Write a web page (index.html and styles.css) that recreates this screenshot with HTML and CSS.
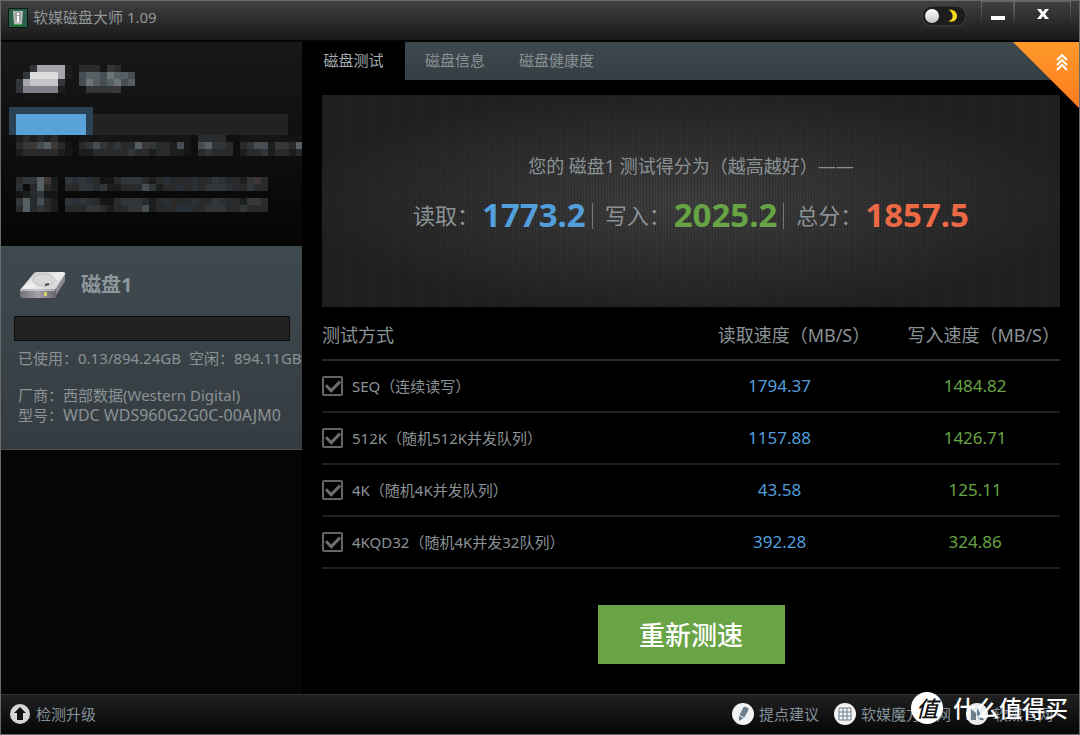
FILE: index.html
```html
<!DOCTYPE html>
<html lang="zh-CN">
<head>
<meta charset="utf-8">
<title>软媒磁盘大师 1.09</title>
<link rel="stylesheet" href="styles.css">
</head>
<body>
<div class="window">
  <header class="titlebar">
    <svg class="app-icon" viewBox="0 0 20 20" aria-hidden="true">
      <rect width="20" height="20" fill="#0b1a13"/><rect x="1" y="1" width="18" height="18" fill="#2a5f48"/>
      <path d="M5 3h10l-1 13H6z" fill="#b9bcbb"/><path d="M7 4h6v9H7z" fill="#a0a4a3"/>
      <path d="M9 5h2v2H9zM9 8h2v6H9z" fill="#fff"/><path d="M6 16h8v1H6z" fill="#3fae3c"/>
    </svg>
    <h1 class="app-title">软媒磁盘大师 1.09</h1>
    <label class="theme"><input class="theme-input" type="checkbox" aria-label="夜间模式">
      <svg viewBox="0 0 46 22" aria-hidden="true">
        <defs><linearGradient id="knob" x2="0" y2="1"><stop stop-color="#fff"/><stop offset="1" stop-color="#c4c4c4"/></linearGradient></defs>
        <rect x="1" y="1" width="44" height="20" rx="10" fill="#1d1d1d" stroke="#424242"/>
        <circle cx="11" cy="11" r="7" fill="url(#knob)"/>
        <path d="M28 5c4-1 8 2 8 6s-4 7-9 5c5 0 7-7 1-11z" fill="#fadb1c"/>
      </svg>
    </label>
    <div class="win-buttons">
      <button class="win-btn" aria-label="最小化"><svg viewBox="0 0 16 16" width="16" height="16"><path d="M1 10h14v4H1z" fill="#fff"/></svg></button>
      <button class="win-btn win-close" aria-label="关闭"><svg viewBox="0 0 16 16" width="16" height="16"><path d="M2 3h4l2 3 2-3h4l-4 5 4 5h-4l-2-3-2 3H2l4-5z" fill="#fff"/></svg></button>
    </div>
  </header>

  <div class="body">
    <aside class="sidebar">
      <section class="disk disk-hidden">
        <svg class="mosaic mosaic-head" data-rows="..diiiib.cccadcaa .dkkkkib.effegffe dijjjjd..egfefgef dhhhhhb..addddyaa .aaaaa..........."></svg>
        <div class="usage"><div class="usage-fill"></div><div class="usage-track"></div></div>
        <svg class="mosaic mosaic-text" data-rows="bcbcbca..aaaaaaaaaaaaaaaa.cccc..aaaaaaaaa cdyefyca.cdedcdccfydccbea.efddw.cdeebydcf bcccccba.bbcccccdccbccbba.cdccw.bccdbccbc . . . cddfyb.dxdxcaacdddcbcxcccxccdxccbdyc x.cfwb.ccddcdbbcccedbccxwxcdddxccdcc abcdaa. dfcecb.dxdxcaacdddcbcxwccxccdxccbdyc cfcdwb.cccddcbccddebccwxxccdddccdccc"></svg>
      </section>
      <section class="disk disk-active">
        <div class="disk-head">
          <svg class="drive" viewBox="0 0 48 30" aria-hidden="true">
            <defs>
              <linearGradient id="top" x2="1" y2="1"><stop stop-color="#b5b5b7"/><stop offset=".5" stop-color="#f0f0f0"/><stop offset="1" stop-color="#c3c3c5"/></linearGradient>
              <linearGradient id="front" x2="1"><stop stop-color="#737078"/><stop offset=".5" stop-color="#a5a3a9"/><stop offset="1" stop-color="#68666c"/></linearGradient>
            </defs>
            <path d="M1 20L15 3q1-1 3-1h26q3 0 2 3L37 20z" fill="url(#top)"/>
            <path d="M46 4v7L36 27v-7z" fill="#8b8a90"/>
            <path d="M1 19h36v8q0 1-2 1H3q-2 0-2-2z" fill="url(#front)"/>
            <path d="M1 20h35" stroke="#eeeef0"/>
            <ellipse cx="25" cy="10" rx="11" ry="6" fill="#d8d8da" stroke="#bebec1"/>
            <path d="M26 15l4-1" stroke="#4c4c50" stroke-width="2"/>
            <rect x="25" y="22" width="3" height="4" fill="#d2d060"/>
          </svg>
          <h2 class="disk-name">磁盘1</h2>
        </div>
        <div class="meter" role="progressbar" aria-label="已使用" aria-valuenow="0"></div>
        <div class="space"><span class="used">已使用：0.13/894.24GB</span><span>空闲：894.11GB</span></div>
        <div class="facts"><div>厂商：西部数据(Western Digital)</div><div>型号：<span class="model">WDC WDS960G2G0C-00AJM0</span></div></div>
      </section>
    </aside>

    <main class="main">
      <nav class="tabs">
        <button class="tab tab-on">磁盘测试</button><button class="tab">磁盘信息</button><button class="tab">磁盘健康度</button>
      </nav>
      <button class="corner" aria-label="收起"><svg viewBox="0 0 12 18" width="12" height="18" fill="none" stroke="#fff" stroke-width="2"><path d="M1 7l5-5 5 5M1 12l5-5 5 5M1 17l5-5 5 5"/></svg></button>
      <div class="content">
        <section class="score">
          <p class="score-title">您的 磁盘1 测试得分为（越高越好）——</p>
          <div class="score-line">
            <div class="score-item">读取：<strong class="num blue">1773.2</strong></div>
            <div class="score-item split">写入：<strong class="num green">2025.2</strong></div>
            <div class="score-item split">总分：<strong class="num red">1857.5</strong></div>
          </div>
        </section>
        <table class="results">
          <colgroup><col class="col-mode"><col class="col-read"><col class="col-write"></colgroup>
          <thead><tr><th class="mode">测试方式</th><th class="speed">读取速度（MB/S）</th><th class="speed">写入速度（MB/S）</th></tr></thead>
          <tbody>
            <tr><td class="mode"><label class="check"><input type="checkbox" checked>SEQ（连续读写）</label></td><td class="blue">1794.37</td><td class="green">1484.82</td></tr>
            <tr><td class="mode"><label class="check"><input type="checkbox" checked>512K（随机512K并发队列）</label></td><td class="blue">1157.88</td><td class="green">1426.71</td></tr>
            <tr><td class="mode"><label class="check"><input type="checkbox" checked>4K（随机4K并发队列）</label></td><td class="blue">43.58</td><td class="green">125.11</td></tr>
            <tr><td class="mode"><label class="check"><input type="checkbox" checked>4KQD32（随机4K并发32队列）</label></td><td class="blue">392.28</td><td class="green">324.86</td></tr>
          </tbody>
        </table>
        <button class="retest">重新测速</button>
      </div>
    </main>
  </div>

  <footer class="footer">
    <a class="foot-link" href="#"><svg viewBox="0 0 22 22" width="22" height="22"><circle cx="11" cy="11" r="10" fill="#d6d6d6"/><path d="M11 4l6 6h-3v7H8v-7H5z" fill="#111"/></svg>检测升级</a>
    <a class="foot-link push" href="#"><svg viewBox="0 0 22 22" width="22" height="22"><circle cx="11" cy="11" r="11" fill="#f2f2f2"/><path d="M11 5q1-2 3-1l2 1q1 1 0 3l-4 7-5 3V13z" fill="#6d7f8c"/><path d="M7 12l5 3M10 17h4" stroke="#f2f2f2"/></svg>提点建议</a>
    <a class="foot-link" href="#"><svg viewBox="0 0 22 22" width="22" height="22"><circle cx="11" cy="11" r="11" fill="#f2f2f2"/><path d="M5 5h12v12H5zM9 5v12M13 5v12M5 9h12M5 13h12" fill="none" stroke="#6d7f8c"/></svg>软媒魔方官网</a>
    <a class="foot-link" href="#"><svg viewBox="0 0 22 22" width="22" height="22"><circle cx="11" cy="11" r="11" fill="#e8ecef"/><path d="M5 17V6l5 4v7zM11 5l7 12h-4l-3-5z" fill="#6d7f8c"/></svg>软媒官网</a>
  </footer>
  <div class="watermark"><span class="mark">值</span><span>什么值得买</span></div>
</div>
<script src="mosaic.js"></script>
</body>
</html>
```
FILE: styles.css
```css
* { box-sizing: border-box; }
body {
  margin: 0;
  background: #000;
  color: #8b9296;
  font: 15px/20px "Noto Sans", "Noto Sans CJK SC", sans-serif;
}
button, input { font: inherit; color: inherit; margin: 0; }
button { border: 0; padding: 0; background: none; cursor: pointer; }
h1, h2, p { margin: 0; font-weight: 400; }
svg { display: block; flex: none; }

.window {
  position: relative;
  display: flex;
  flex-direction: column;
  min-height: 100vh;
  border: 1px solid #6a6a6a;
  overflow: hidden;
}
.titlebar {
  display: flex;
  align-items: flex-start;
  height: 41px;
  padding: 0 8px 0 7px;
  background: linear-gradient(#414141, #1a1a1a 95%);
  border-bottom: 2px solid #050505;
}
.app-icon { width: 20px; height: 20px; margin-top: 7px; }
.app-title { margin: 6px auto 0 5px; font-size: 15px; line-height: 20px; color: #929799; }
.theme { display: block; width: 46px; height: 22px; margin: 4px 14px 0 0; }
.theme svg { width: 46px; height: 22px; }
.theme-input { position: absolute; opacity: 0; }
.win-buttons { display: flex; }
.win-btn {
  display: flex;
  justify-content: center;
  align-items: center;
  width: 33px;
  height: 24px;
  border: 1px solid transparent;
  border-image: linear-gradient(#666, transparent) 1;
  border-bottom: 0;
}
.win-close { width: 57px; }

.body { display: flex; flex: 1; }
.sidebar { width: 301px; flex: none; background: #050505; overflow: hidden; }
.disk-hidden { height: 204px; padding: 23px 0 0 8px; background: linear-gradient(#181818, #050505); }
.mosaic { margin-left: 7px; height: 35px; }
.mosaic-text { width: 287px; height: 77px; }
.usage { display: flex; align-items: flex-end; height: 35px; padding-top: 7px; margin-right: 14px; }
.usage-fill { width: 30%; height: 28px; background: #58a1d9; border: 7px solid #2b4254; border-bottom: 0; }
.usage-track { flex: 1; height: 21px; background: #222; }
.disk-active {
  height: 204px;
  padding-top: 20px;
  background: linear-gradient(#3e494f, #353c41);
  border-bottom: 1px solid #4a5257;
}
.disk-head { display: flex; align-items: center; gap: 14px; height: 38px; padding-left: 18px; }
.drive { width: 48px; height: 30px; }
.disk-name { font-size: 20px; line-height: 28px; font-weight: 700; color: #8e979b; }
.meter { height: 25px; margin: 12px 12px 0 13px; background: #222; border: 1px solid #0c0c0c; }
.space { display: flex; gap: 6px; margin: 7px 0 17px 17px; white-space: nowrap; }
.used { width: 165px; flex: none; overflow: hidden; }
.facts { padding-left: 17px; white-space: nowrap; }
.model { font-size: 16px; }

.main { position: relative; flex: 1; min-width: 0; }
.tabs { display: flex; height: 38px; background: linear-gradient(#3e494f, #353e43); }
.tab { padding: 0 17px 2px; }
.tab:nth-child(2) { padding-left: 20px; }
.tab-on { width: 103px; background: #000; color: #a3abb0; }
.corner {
  position: absolute;
  top: 0;
  right: 0;
  display: flex;
  width: 66px;
  height: 66px;
  padding: 11px 11px 0 0;
  background: linear-gradient(#ff9a2a, #ff7a1c);
  clip-path: polygon(0 0, 100% 0, 100% 100%);
}
.corner svg { margin: 0 0 auto auto; }
.content { display: flex; flex-direction: column; padding: 15px 19px 30px 20px; }
.score {
  display: flex;
  flex-direction: column;
  align-items: center;
  gap: 19px;
  height: 212px;
  padding-top: 59px;
  background:
    repeating-linear-gradient(90deg, rgba(0,0,0,.14) 0 1px, transparent 1px 3px),
    repeating-linear-gradient(rgba(0,0,0,.06) 0 1px, transparent 1px 3px),
    radial-gradient(ellipse at center, #404040, #222 75%);
}
.score-title { font-size: 18px; line-height: 24px; }
.score-line { display: flex; font-size: 22px; line-height: 36px; }
.score-item { display: flex; align-items: center; }
.split { padding-left: 13px; margin-left: 6px; background: linear-gradient(#777, #777) 0 6px / 1px 26px no-repeat; }
.num { font-size: 33px; line-height: 36px; margin-left: 3px; }
.blue { color: #529fdc; }
.green { color: #67a445; }
.red { color: #ed6844; }

.results { width: 100%; table-layout: fixed; border-collapse: collapse; font-size: 17px; }
.col-mode { width: 47%; }
.col-read { width: 30%; }
.col-write { width: 23%; }
.results th { height: 53px; padding: 3px 0 0; font-size: 18px; font-weight: 400; border-bottom: 2px solid #2b2b2b; white-space: nowrap; }
.results .speed { text-align: right; }
.results .speed:nth-child(2) { padding-right: 20px; }
.results td { height: 52px; padding: 0; text-align: center; border-bottom: 2px solid #202020; }
.results .mode { text-align: left; }
.check { display: flex; align-items: center; gap: 9px; font-size: 15px; }
.check input {
  appearance: none;
  width: 21px;
  height: 20px;
  border: 2px solid #656565;
  border-radius: 2px;
  display: grid;
  place-items: center;
}
.check input:checked::before {
  content: "";
  width: 11px;
  height: 6px;
  margin-bottom: 3px;
  border: solid #6c6c6c;
  border-width: 0 0 3px 3px;
  transform: rotate(-45deg);
}
.retest {
  align-self: center;
  width: 187px;
  height: 59px;
  margin-top: 36px;
  background: #69a446;
  color: #fff;
  font-size: 26px;
  font-weight: 500;
}
.footer {
  display: flex;
  align-items: center;
  gap: 15px;
  height: 40px;
  padding: 0 26px 2px 8px;
  background: linear-gradient(#202020, #060606);
  border-top: 1px solid #303030;
}
.foot-link { display: flex; align-items: center; gap: 5px; color: #83919a; text-decoration: none; }
.push { margin-left: auto; }
.watermark {
  position: absolute;
  right: 11px;
  bottom: 10px;
  display: flex;
  align-items: center;
  gap: 10px;
  color: #fff;
  font-size: 23px;
  line-height: 32px;
  font-weight: 500;
  pointer-events: none;
}
.mark {
  width: 32px;
  height: 32px;
  border-radius: 50%;
  background: #fff;
  color: #111;
  text-align: center;
  font-size: 22px;
  font-style: italic;
}
```
FILE: mosaic.js
```javascript
// Draws the pixelated blocks that hide the first disk's details.
const CELL = 7;
const palette = {
  a: "#151515", b: "#1c1d1d", c: "#282a2c", d: "#333639", e: "#464e54", f: "#566064",
  g: "#6c7475", h: "#827e8a", i: "#a6a5a9", j: "#c5c5c9", k: "#dddddd",
  w: "#2d2926", x: "#2a3038", y: "#3d3835"
};
document.querySelectorAll(".mosaic").forEach(svg => {
  const rows = svg.dataset.rows.split(" ");
  const cols = Math.max(...rows.map(r => r.length));
  svg.setAttribute("viewBox", `0 0 ${cols * CELL} ${rows.length * CELL}`);
  svg.setAttribute("width", cols * CELL);
  svg.setAttribute("shape-rendering", "crispEdges");
  rows.forEach((row, y) => [...row].forEach((key, x) => {
    if (!palette[key]) return;
    const r = document.createElementNS("http://www.w3.org/2000/svg", "rect");
    r.setAttribute("x", x * CELL);
    r.setAttribute("y", y * CELL);
    r.setAttribute("width", CELL);
    r.setAttribute("height", CELL);
    r.setAttribute("fill", palette[key]);
    svg.append(r);
  }));
});
```
